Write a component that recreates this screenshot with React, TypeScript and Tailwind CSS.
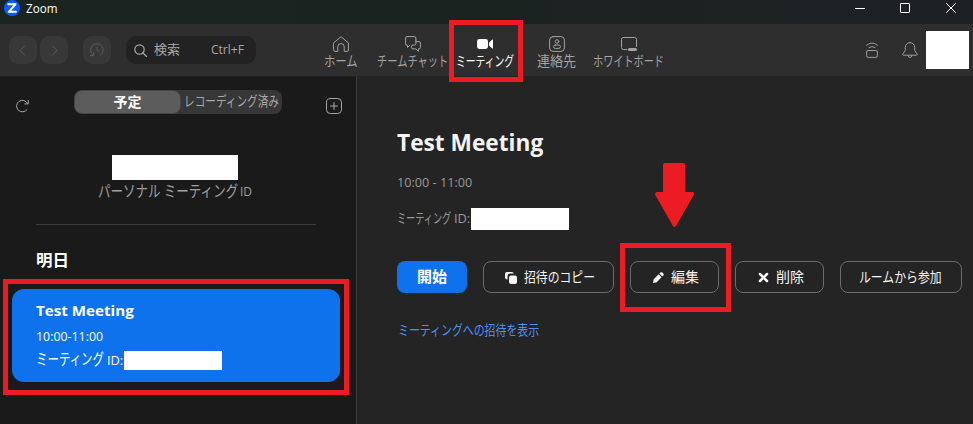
import { useLayoutEffect, useRef, useState, type ReactNode } from "react";

/* Single line of text condensed or widened to fill the width of its box. */
function Fit({ className, children }: { className: string; children: ReactNode }) {
  const box = useRef<HTMLSpanElement>(null);
  const text = useRef<HTMLSpanElement>(null);
  const [scale, setScale] = useState(1);
  useLayoutEffect(() => {
    if (box.current && text.current) {
      setScale(box.current.clientWidth / text.current.offsetWidth);
    }
  }, []);
  return (
    <span ref={box} className={`block shrink-0 whitespace-nowrap ${className}`}>
      <span ref={text} className="inline-block origin-left" style={{ transform: `scaleX(${scale})` }}>
        {children}
      </span>
    </span>
  );
}

function Svg({ className, children, w = 16, h = 16 }: { className?: string; children: ReactNode; w?: number; h?: number }) {
  return (
    <svg width={w} height={h} viewBox={`0 0 ${w} ${h}`} fill="none" stroke="currentColor" strokeLinecap="round" strokeLinejoin="round" className={`shrink-0 ${className ?? ""}`}>
      {children}
    </svg>
  );
}

function NavItem({ icon, label, width, active }: { icon: ReactNode; label: string; width: string; active?: boolean }) {
  return (
    <button className={`flex w-[72px] shrink-0 flex-col items-center ${active ? "text-white" : "text-[#a3a3a3]"}`}>
      {icon}
      <Fit className={`mr-px h-[18px] text-[14px] leading-[18px] ${width}`}>{label}</Fit>
    </button>
  );
}

function TitleBar() {
  return (
    <div className="flex h-6 bg-linear-to-r from-[#1b2421] via-[#1b2321] to-[#1e2124] text-white">
      <svg width="16" height="16" viewBox="0 0 16 16" className="ml-1">
        <circle cx="8" cy="8" r="8" fill="#0b5cff" />
        <path d="M4.300 4.300h7.200L4.700 11.800h7.200" fill="none" stroke="#fff" strokeWidth="2" strokeLinejoin="round" strokeLinecap="round" />
      </svg>
      <Fit className="ml-[6px] h-[18px] w-[31px] text-[12px] leading-[18px]">Zoom</Fit>
      <div className="ml-auto flex pr-[17px]">
        <Svg w={10} className="mr-[35px]"><path d="M0 8.500h10" strokeLinecap="butt" /></Svg>
        <Svg w={10} className="mr-[36px]"><rect x=".5" y="3.500" width="9" height="9" rx=".6" /></Svg>
        <Svg w={10}><path d="m.5 3.500 9 9m0-9-9 9" /></Svg>
      </div>
    </div>
  );
}

function Header() {
  return (
    <header className="flex h-[52px] bg-[#2e2e2e]">
      <div className="flex pt-3 pl-[9px] text-[#5b5b5b]">
        <button className="flex size-7 items-center justify-center rounded-[9px] bg-[#383838]">
          <Svg><path d="M9.500 4 5 8.500 9.500 13" /></Svg>
        </button>
        <button className="ml-[3px] flex size-7 items-center justify-center rounded-[9px] bg-[#383838]">
          <Svg><path d="M6.500 4 11 8.500 6.500 13" /></Svg>
        </button>
        <button className="ml-[15px] flex size-7 items-center justify-center rounded-[9px] bg-[#383838]">
          <Svg>
            <path d="M4.200 13.200A6.300 6.300 0 1 1 11 13.600M1.500 13.600h3.200v-3M8 5v3.500l1.800.8" />
          </Svg>
        </button>
        <div className="ml-[15px] flex h-7 w-[130px] items-center rounded-[10px] bg-[#222222] pl-2 text-[#a8a8a8]">
          <Svg w={13} h={13}><circle cx="5.500" cy="5.500" r="4.700" strokeWidth="1.200" /><path d="m9 9 3.500 3.500" strokeWidth="1.200" /></Svg>
          <Fit className="ml-[7px] h-7 w-[26px] text-[13px] leading-[27px]">検索</Fit>
          <Fit className="ml-[31px] h-7 w-[33px] text-[12px] leading-[27px]">Ctrl+F</Fit>
        </div>
      </div>
      <nav className="ml-[49px] flex pt-3">
        <NavItem label="ホーム" width="w-[34px]" icon={
          <Svg><path d="M.6 6.900 8 .7l7.400 6.200v7.200q0 1.300-1.300 1.300h-2.900v-4.600a3.200 3.200 0 0 0-6.400 0v4.600H1.900q-1.300 0-1.300-1.300z" /></Svg>
        } />
        <NavItem label="チームチャット" width="w-[71px]" icon={
          <Svg><path d="M4.600 9.500 2.500 11.500v-2.200H2A1.400 1.400 0 0 1 .6 7.900V2A1.400 1.400 0 0 1 2 .6h7.500A1.400 1.400 0 0 1 10.900 2v2" /><path d="M10.900 5.600h3.100q1.400 0 1.400 1.400v4.500q0 1.400-1.400 1.400h-.6v2.300l-2.600-2.300H8q-1.400 0-1.400-1.400V10q0-1 1-1h1.900q1.400 0 1.400-1.400V4" /></Svg>
        } />
        <NavItem active label="ミーティング" width="w-[58px]" icon={
          <Svg><g fill="currentColor" stroke="none"><rect y="3" width="11" height="10" rx="2.400" /><path d="M12 7.200q0-.6.5-1L15 3.700q1-.7 1 .3v8q0 1-1 .3l-2.500-2.400q-.5-.4-.5-1z" /></g></Svg>
        } />
        <NavItem label="連絡先" width="w-[39px]" icon={
          <Svg><rect x=".6" y=".6" width="14.800" height="14.800" rx="3.500" /><circle cx="8" cy="5.500" r="1.800" /><rect x="4.600" y="9" width="6.800" height="3.400" rx="1.700" /></Svg>
        } />
        <NavItem label="ホワイトボード" width="w-[71px]" icon={
          <Svg><path d="M6 13.500H2.500q-2 0-2-2V3.500q0-2 2-2h11q2 0 2 2v7" /><rect x="7" y="12" width="9" height="3" rx="1.500" fill="currentColor" stroke="none" /></Svg>
        } />
      </nav>
      <div className="ml-auto flex pr-1 text-[#9a9da1]">
        <Svg w={12} className="mt-[18px] mr-6"><path d="M.6 3.200Q6-1.400 11.400 3.200M3 5.500q3-2.100 6 0" /><rect x=".6" y="8.500" width="10.800" height="6.900" rx="1.500" /></Svg>
        <Svg className="mt-[18px] mr-2"><path d="M8 .6c-3 0-4.700 2.100-4.700 4.700v3.200L.8 12q-.5 1.200.7 1.200h13q1.200 0 .7-1.200l-2.500-3.500V5.300C12.700 2.700 11 .6 8 .6zM6 13.400a2 2 0 0 0 4 0" /></Svg>
        <div className="mt-[7px] h-[38px] w-[43px] bg-white" />
      </div>
    </header>
  );
}

function Sidebar() {
  return (
    <aside className="flex w-[357px] shrink-0 flex-col border-t border-r border-t-[#222222] border-r-[#3b3b3b] bg-[#1a1a1a]">
      <div className="flex pl-[15px] text-[#a8a8a8]">
        <Svg className="mt-[21px]"><path d="M12.600 5.500A5.800 5.800 0 1 0 12.100 11.500M13.300 2.400v3.500H9.800" /></Svg>
        <div className="mt-[13px] ml-[43px] flex h-6 w-[208px] rounded-lg bg-[#373737]">
          <div className="flex w-[107px] justify-center rounded-lg border border-[#444] bg-[#5c5c5c] text-white">
            <Fit className="w-[28px] text-[14px] leading-[21px] font-bold">予定</Fit>
          </div>
          <Fit className="ml-[3px] w-[95px] text-[14px] leading-[22px]">レコーディング済み</Fit>
        </div>
        <Svg className="mt-[21px] ml-11"><rect x=".5" y=".5" width="15" height="15" rx="3.800" /><path d="M8 4.500v7M4.500 8h7" /></Svg>
      </div>
      <div className="mt-[41px] ml-[112px] h-[25px] w-[126px] bg-white" />
      <div className="ml-[98px] flex h-[22px] text-[#a0a0a0]">
        <Fit className="w-[140px] text-[16px] leading-[23px]">パーソナル ミーティング</Fit>
        <Fit className="ml-[2px] w-[12px] text-[12px] leading-6">ID</Fit>
      </div>
      <div className="mt-[22px] ml-9 h-px w-[280px] bg-[#3b3b3b]" />
      <Fit className="mt-[23px] ml-9 h-[25px] w-[33px] text-[16px] leading-6 font-bold text-white">明日</Fit>
      <div className="mt-4 ml-3 flex h-[93px] w-[328px] flex-col rounded-xl bg-[#0e72ed] pl-6 text-white">
        <Fit className="mt-[11px] h-5 w-[98px] text-[15px] leading-5 font-bold">Test Meeting</Fit>
        <Fit className="mt-[8px] h-[18px] w-[67px] text-[12px] leading-[18px]">10:00-11:00</Fit>
        <div className="mt-[3px] flex h-[22px]">
          <Fit className="w-[68px] text-[16px] leading-[20px]">ミーティング</Fit>
          <Fit className="ml-[3px] w-[16px] text-[12px] leading-[23px]">ID:</Fit>
          <div className="mt-[2px] ml-px h-[19px] w-[98px] bg-white" />
        </div>
      </div>
    </aside>
  );
}

function OutlineButton({ className, children }: { className: string; children: ReactNode }) {
  return (
    <button className={`flex h-8 shrink-0 items-center rounded-lg border border-[#6b6b6b] text-[14px] leading-[30px] text-[#f5f5f5] ${className}`}>
      {children}
    </button>
  );
}

function Details() {
  return (
    <main className="flex grow flex-col bg-[#242424] pl-10">
      <Fit className="mt-[51px] h-[30px] w-[146px] text-[23px] leading-[30px] font-bold text-[#f5f5f5]">Test Meeting</Fit>
      <Fit className="mt-[17px] h-[18px] w-[75px] text-[12px] leading-[18px] text-[#999]">10:00 - 11:00</Fit>
      <div className="mt-[16px] flex h-[22px] text-[#999]">
        <Fit className="w-[54px] text-[14px] leading-[19px]">ミーティング</Fit>
        <Fit className="ml-[3px] w-[16px] text-[12px] leading-[21px]">ID:</Fit>
        <div className="ml-px h-[22px] w-[98px] bg-white" />
      </div>
      <div className="mt-[31px] flex gap-4">
        <button className="flex h-8 w-[70px] justify-center rounded-lg bg-[#0e72ed] text-white">
          <Fit className="w-[30px] text-[15px] leading-[31px] font-bold">開始</Fit>
        </button>
        <OutlineButton className="w-[131px] pl-[21px]">
          <Svg w={12} h={12} className="mt-px"><g fill="currentColor" stroke="none"><path d="M2 0h5q1.500 0 1.800 1.500H5.500Q2.500 1.500 2.500 4.500V7.500Q0 7.500 0 5.500V2q0-2 2-2z" /><rect x="4" y="3.500" width="8" height="8.500" rx="2" /></g></Svg>
          <Fit className="ml-[7px] w-[71px]">招待のコピー</Fit>
        </OutlineButton>
        <OutlineButton className="w-[89px] pl-[22px]">
          <Svg w={11} h={11}><path fill="currentColor" stroke="none" d="M0 11 .7 7.200 5.600 2.300 8.500 5.200 3.700 10.200zM6.400 1.500l1-.9q1-.9 2 0l.9.900q.9 1 0 2l-1 1z" /></Svg>
          <Fit className="ml-[7px] w-[28px]">編集</Fit>
        </OutlineButton>
        <OutlineButton className="w-[89px] pl-[22px]">
          <Svg w={11} h={11}><path d="m2 2 7 7m0-7-7 7" strokeWidth="2.500" /></Svg>
          <Fit className="ml-[7px] w-[28px]">削除</Fit>
        </OutlineButton>
        <OutlineButton className="w-[122px] pl-[18px]">
          <Fit className="w-[83px]">ルームから参加</Fit>
        </OutlineButton>
      </div>
      <Fit className="mt-[26px] ml-px h-[22px] w-[141px] text-[14px] leading-[22px] text-[#4a93f5]">ミーティングへの招待を表示</Fit>
    </main>
  );
}

export default function App() {
  return (
    <div className="relative flex h-[424px] w-[973px] flex-col overflow-hidden bg-[#242424] font-['Open_Sans','Noto_Sans_CJK_JP',sans-serif]">
      <TitleBar />
      <Header />
      <div className="flex grow">
        <Sidebar />
        <Details />
      </div>
      <div className="absolute top-5 left-[449px] h-[62px] w-[74px] border-[5px] border-[#ed1c24]" />
      <div className="absolute top-[279px] left-[3px] h-[116px] w-[346px] border-[5px] border-[#ed1c24]" />
      <div className="absolute top-[243px] left-[620px] h-[69px] w-[111px] border-[5px] border-[#ed1c24]" />
      <svg width="39" height="64" viewBox="0 0 39 64" className="absolute top-[163px] left-[655px]">
        <path d="M10 0h18q2 0 2 2v27h7q2.500 0 2 2.500L21 63q-1.500 2-3 0L0 31.500Q0 29 2 29h6V2q0-2 2-2z" fill="#ed1c24" />
      </svg>
    </div>
  );
}
